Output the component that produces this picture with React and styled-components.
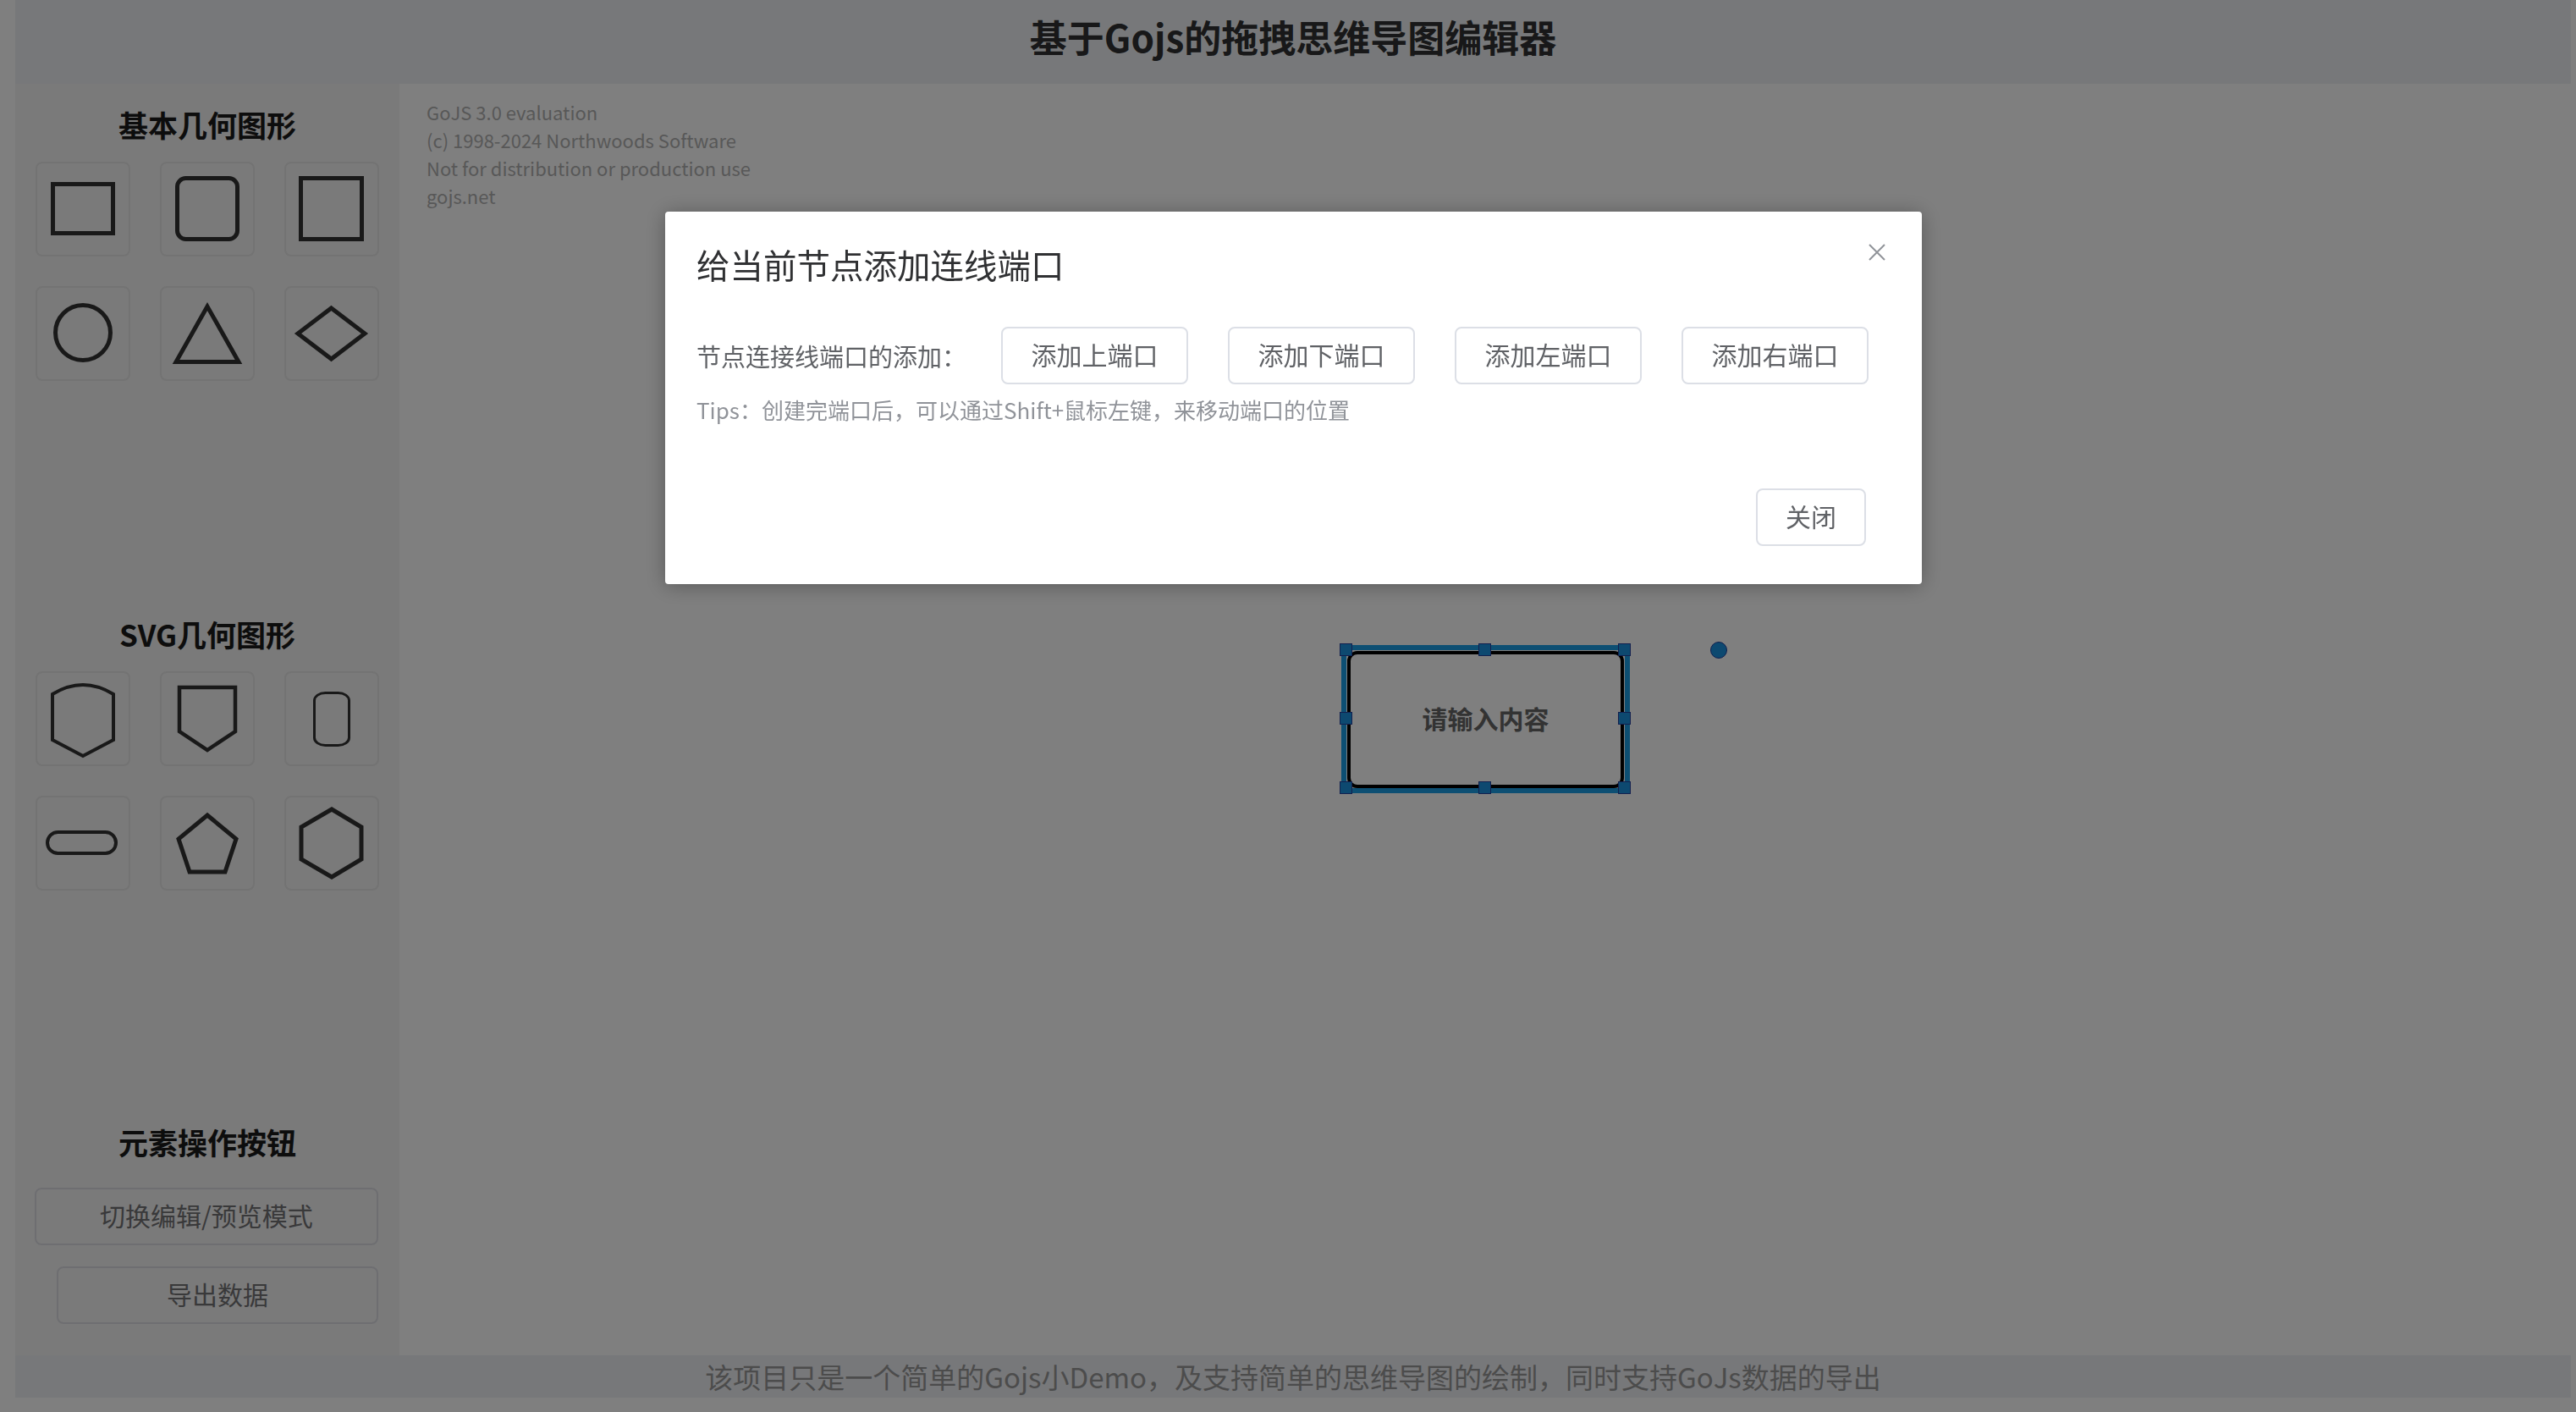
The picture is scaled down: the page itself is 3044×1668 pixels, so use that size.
import styled, { createGlobalStyle } from 'styled-components';

const GlobalStyle = createGlobalStyle`
  html, body {
    margin: 0;
    padding: 0;
    background: #fff;
  }
  body {
    font-family: "Noto Sans CJK SC", "Noto Sans", sans-serif;
  }
  * {
    box-sizing: border-box;
  }
`;

const Shell = styled.div`
  width: 3020px;
  height: 1651px;
  margin-left: 18px;
  display: flex;
  flex-direction: column;
`;

const Header = styled.header`
  height: 99px;
  flex: none;
  background: #eff0f4;
  display: flex;
  justify-content: center;
  padding-top: 21px;

  h1 {
    margin: 0;
    font-size: 44px;
    font-weight: 700;
    color: #303133;
    line-height: 44px;
  }
`;

const Main = styled.main`
  flex: 1;
  display: flex;
  min-height: 0;
`;

const Sidebar = styled.aside`
  width: 454px;
  flex: none;
  background: #f4f4f4;
  display: flex;
  flex-direction: column;
`;

const Section = styled.section`
  height: ${props => props.height}px;
  padding-top: 23px;
`;

const SectionTitle = styled.h3`
  margin: 0 0 19px;
  font-size: 35px;
  line-height: 50px;
  font-weight: 700;
  color: #1a1a1a;
  text-align: center;
`;

const ShapeGrid = styled.div`
  display: grid;
  grid-template-columns: repeat(3, 112px);
  gap: 35px;
  justify-content: center;
`;

const ShapeTile = styled.div`
  width: 112px;
  height: 112px;
  border: 2px solid #e6e6e6;
  border-radius: 8px;
  display: flex;
  align-items: center;
  justify-content: center;

  svg {
    display: block;
    fill: none;
    stroke: #333;
  }
`;

const ActionList = styled.div`
  display: flex;
  flex-direction: column;
  align-items: flex-end;
  gap: 25px;
  padding: 10px 25px 0 23px;
`;

const ActionButton = styled.button`
  width: ${props => (props.indent ? 380 : 406)}px;
  height: 68px;
  padding: 0 0 4px;
  border: 2px solid #dcdde3;
  border-radius: 8px;
  background: transparent;
  font-family: inherit;
  font-size: 30px;
  line-height: 1;
  color: #727274;
  cursor: pointer;
`;

const Canvas = styled.div`
  width: 2572px;
  flex: none;
  position: relative;
  background: #fff;
`;

const Watermark = styled.div`
  padding: 17px 0 0 32px;
  font-family: "Noto Sans CJK SC", "Noto Sans", sans-serif;
  font-size: 22px;
  line-height: 33px;
  color: #b0b0b0;
`;

const NodeFrame = styled.div`
  position: absolute;
  left: 1113px;
  top: 663px;
  width: 341px;
  height: 175px;
  border: 6px solid #1a9ee6;
  padding: 1px 1px 0 1px;
`;

const NodeBox = styled.div`
  width: 100%;
  height: 100%;
  border: 4px solid #000;
  border-radius: 12px;
  background: #fff;
  display: flex;
  align-items: center;
  justify-content: center;
  padding-bottom: 4px;
  font-size: 30px;
  font-weight: 700;
  color: #666;
`;

const Handle = styled.span`
  position: absolute;
  width: 15px;
  height: 15px;
  background: #1b93e0;
  border: 1.5px solid #24409e;
  left: ${props => props.x}px;
  top: ${props => props.y}px;
`;

const PortDot = styled.span`
  position: absolute;
  left: 1549px;
  top: 659px;
  width: 20px;
  height: 20px;
  border-radius: 50%;
  background: #1b93e0;
  border: 1.5px solid #24409e;
`;

const Footer = styled.footer`
  height: 50px;
  flex: none;
  background: #eff0f4;
  display: flex;
  align-items: center;
  justify-content: center;
  font-size: 33px;
  color: #999;
`;

const Overlay = styled.div`
  position: fixed;
  inset: 0;
  background: rgba(0, 0, 0, 0.5);
  display: flex;
  align-items: flex-start;
`;

const Dialog = styled.div`
  position: relative;
  margin: 250px 0 0 786px;
  width: 1485px;
  height: 440px;
  background: #fff;
  border-radius: 4px;
  box-shadow: 0 2px 24px rgba(0, 0, 0, 0.3);
  padding: 39px 62px 45px 37px;
  display: flex;
  flex-direction: column;
`;

const DialogTitle = styled.h2`
  margin: 0;
  font-size: 39.5px;
  line-height: 46px;
  font-weight: 400;
  color: #303133;
`;

const CloseIcon = styled.button`
  position: absolute;
  top: 37px;
  right: 42px;
  width: 22px;
  height: 22px;
  padding: 0;
  border: none;
  background: none;
  cursor: pointer;

  svg {
    display: block;
    stroke: #909399;
  }
`;

const PortRow = styled.div`
  margin-top: 51px;
  display: flex;
  align-items: center;
  white-space: nowrap;
`;

const PortLabel = styled.span`
  flex: none;
  font-size: 29px;
  color: #606266;
  margin-right: 41px;
`;

const ButtonGroup = styled.div`
  flex: none;
  display: flex;
  gap: 47px;
`;

const PlainButton = styled.button`
  flex: none;
  width: ${props => props.width}px;
  height: 68px;
  padding: 0 0 4px;
  border: 2px solid #dcdfe6;
  border-radius: 8px;
  background: #fff;
  font-family: inherit;
  font-size: 30px;
  line-height: 1;
  color: #606266;
  cursor: pointer;
`;

const Tip = styled.p`
  margin: 12px 0 0;
  font-size: 26px;
  line-height: 36px;
  color: #909399;
`;

const DialogFooter = styled.div`
  margin-top: auto;
  display: flex;
  justify-content: flex-end;
  padding-right: 4px;
`;

const basicShapes = [
  <rect key="r" x="20.5" y="26.5" width="71" height="58" strokeWidth="5" />,
  <rect key="rr" x="20.5" y="19.5" width="71" height="72" rx="10" strokeWidth="5" />,
  <rect key="sq" x="19.5" y="19.5" width="72" height="72" strokeWidth="5" />,
  <circle key="c" cx="56" cy="55" r="32.5" strokeWidth="5" />,
  <polygon key="t" points="56,24 19,89.5 93,89.5" strokeWidth="5" />,
  <polygon key="d" points="55.5,26 95,56 55.5,86 16,56" strokeWidth="5" />,
];

const svgShapes = [
  <path key="sh" d="M20 27 Q56 5 92 27 L92 81 L56 100 L20 81 Z" strokeWidth="4" />,
  <polygon key="pe" points="23,19 89,19 89,71 56,93 23,71" strokeWidth="4.5" />,
  <rect key="cap" x="35.5" y="25.5" width="41" height="62" rx="13" ry="9" strokeWidth="3" />,
  <rect key="pill" x="14" y="43" width="81" height="25" rx="12.5" strokeWidth="4" />,
  <polygon key="pen" points="56,23 90,51 77,90 35,90 22,51" strokeWidth="5" />,
  <polygon key="hex" points="56,16 91,37 91,75 56,96 20,75 20,37" strokeWidth="5" />,
];

const ShapePanel = ({ shapes }) => (
  <ShapeGrid>
    {shapes.map(shape => (
      <ShapeTile key={shape.key}>
        <svg width="108" height="108" viewBox="2 2 108 108">{shape}</svg>
      </ShapeTile>
    ))}
  </ShapeGrid>
);

const handles = [
  [0, 0], [164, 0], [329, 0],
  [0, 81], [329, 81],
  [0, 163], [164, 163], [329, 163],
];

export default function App() {
  return (
    <>
      <GlobalStyle />
      <Shell>
        <Header>
          <h1>基于Gojs的拖拽思维导图编辑器</h1>
        </Header>
        <Main>
          <Sidebar>
            <Section height={602}>
              <SectionTitle>基本几何图形</SectionTitle>
              <ShapePanel shapes={basicShapes} />
            </Section>
            <Section height={600}>
              <SectionTitle>SVG几何图形</SectionTitle>
              <ShapePanel shapes={svgShapes} />
            </Section>
            <Section height={300}>
              <SectionTitle>元素操作按钮</SectionTitle>
              <ActionList>
                <ActionButton>切换编辑/预览模式</ActionButton>
                <ActionButton indent>导出数据</ActionButton>
              </ActionList>
            </Section>
          </Sidebar>
          <Canvas>
            <Watermark>
              <div>GoJS 3.0 evaluation</div>
              <div>(c) 1998-2024 Northwoods Software</div>
              <div>Not for distribution or production use</div>
              <div>gojs.net</div>
            </Watermark>
            <NodeFrame>
              <NodeBox>请输入内容</NodeBox>
              {handles.map(([x, y]) => (
                <Handle key={`${x}-${y}`} x={x - 8} y={y - 8} />
              ))}
            </NodeFrame>
            <PortDot />
          </Canvas>
        </Main>
        <Footer>该项目只是一个简单的Gojs小Demo，及支持简单的思维导图的绘制，同时支持GoJs数据的导出</Footer>
      </Shell>

      <Overlay>
        <Dialog>
          <DialogTitle>给当前节点添加连线端口</DialogTitle>
          <CloseIcon aria-label="close">
            <svg width="22" height="22" viewBox="0 0 22 22">
              <path d="M2 2 L20 20 M20 2 L2 20" strokeWidth="2" />
            </svg>
          </CloseIcon>
          <PortRow>
            <PortLabel>节点连接线端口的添加：</PortLabel>
            <ButtonGroup>
              <PlainButton width={221}>添加上端口</PlainButton>
              <PlainButton width={221}>添加下端口</PlainButton>
              <PlainButton width={221}>添加左端口</PlainButton>
              <PlainButton width={221}>添加右端口</PlainButton>
            </ButtonGroup>
          </PortRow>
          <Tip>Tips：创建完端口后，可以通过Shift+鼠标左键，来移动端口的位置</Tip>
          <DialogFooter>
            <PlainButton width={130}>关闭</PlainButton>
          </DialogFooter>
        </Dialog>
      </Overlay>
    </>
  );
}
